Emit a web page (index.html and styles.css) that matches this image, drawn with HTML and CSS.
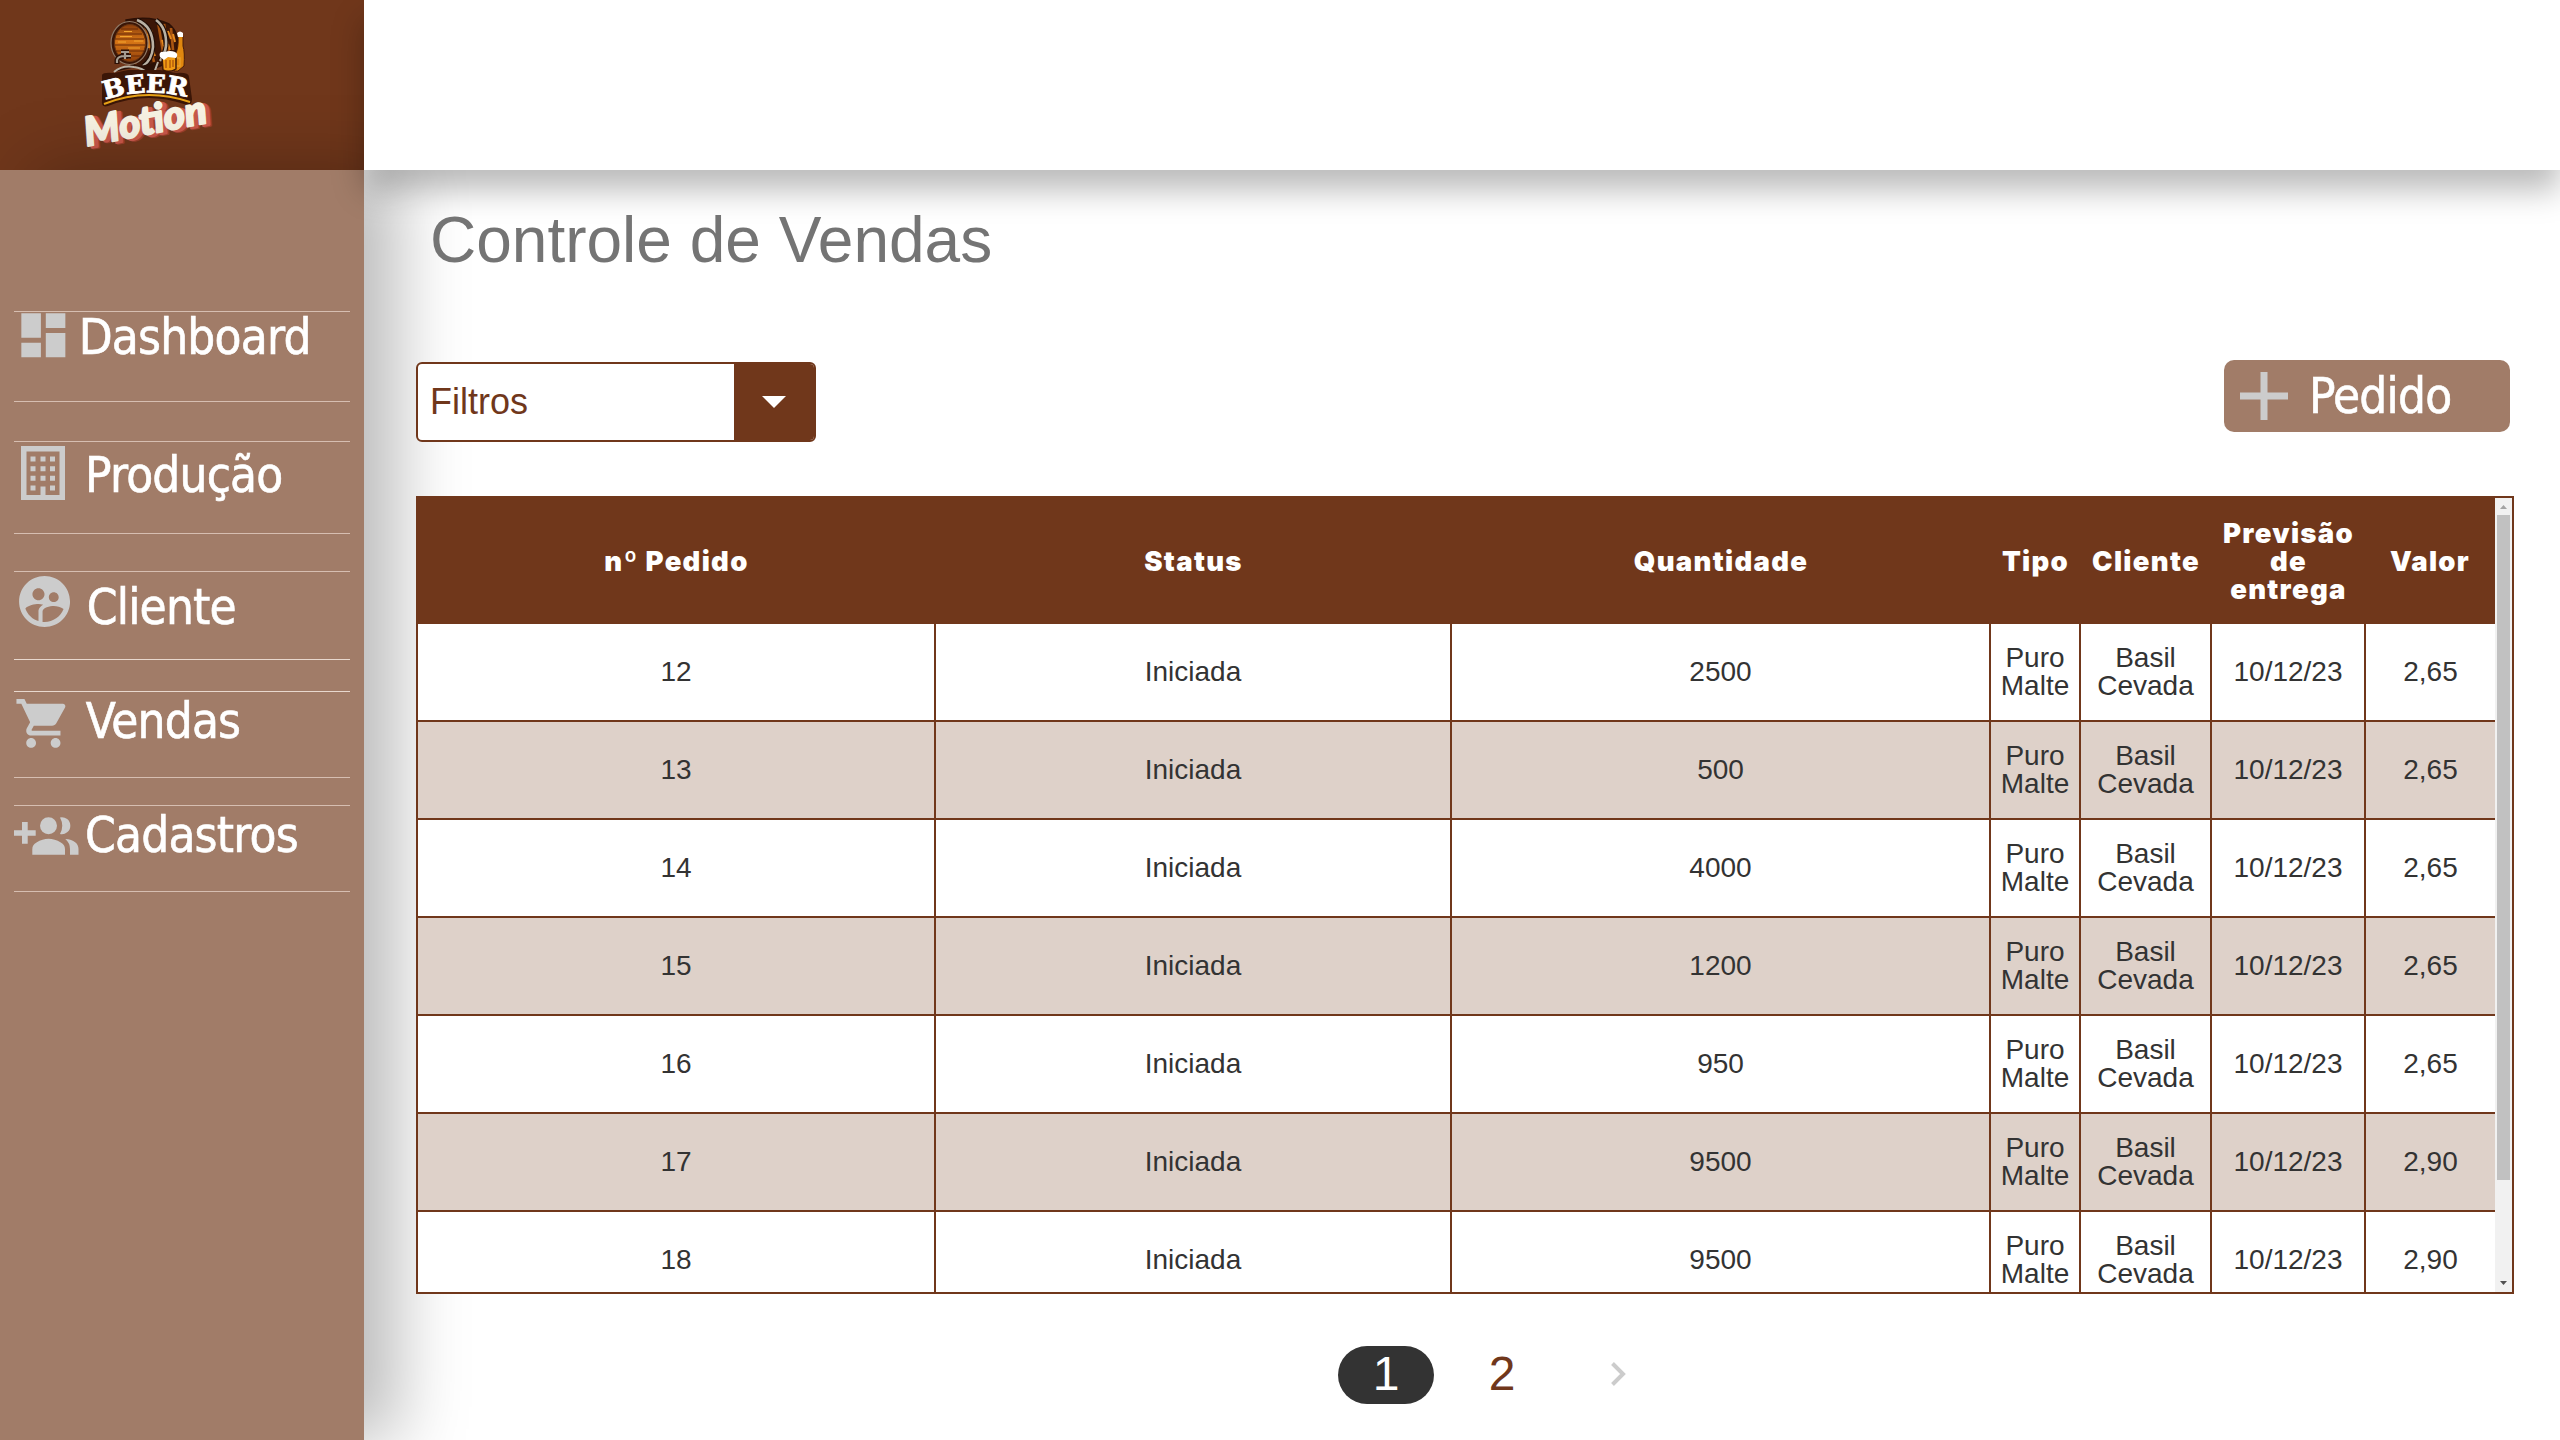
FILE: index.html
```html
<!DOCTYPE html>
<html lang="pt-BR">
<head>
<meta charset="utf-8">
<title>Beer Motion - Controle de Vendas</title>
<link rel="stylesheet" href="styles.css">
</head>
<body>
<div class="brand">
  <svg class="logo" viewBox="80 10 140 145" role="img" aria-label="Beer Motion">
    <defs>
      <linearGradient id="wood" x1="0" y1="0" x2="0" y2="1">
        <stop offset="0" stop-color="#8a3d0c"/><stop offset=".45" stop-color="#d97716"/><stop offset="1" stop-color="#8f3e0a"/>
      </linearGradient>
    </defs>
    <!-- barrel -->
    <path d="M126 20Q150 15 169 24Q180 33 177 49Q173 63 152 69L131 65Z" fill="#3b1607" stroke="#2b1006" stroke-width="1.5"/>
    <path d="M136 22Q141 42 135 64M158 22L164 58M164 24L169 54M171 28L173 50M144 22L154 62" stroke="#a95512" stroke-width="2.600" fill="none"/>
    <path d="M168 31l3 8M151 30l3 12M162 40l3 10M152 48l3 8M168 44l2 6M173 34l2 8M147 34l2 14" stroke="#e78a1f" stroke-width="2" fill="none"/>
    <ellipse cx="129.500" cy="43" rx="18.500" ry="21.500" fill="#3b1607" stroke="#8f7a68" stroke-width="1.200"/>
    <ellipse cx="130" cy="43" rx="15.500" ry="18.500" fill="url(#wood)" stroke="#6a3512" stroke-width="1"/>
    <path d="M117 34h25M115 39h29M115 45h30M116 51h28M119 56h22M121 29h17" stroke="#682b08" stroke-width="1" fill="none"/>
    <path d="M120 36.500h12M134 41h9M118 42h8M128 48h12M124 31.500h8" stroke="#f3a52f" stroke-width="1" fill="none"/>
    <path d="M137 20Q153 26 153 47Q152 60 143 66M156 20Q167 28 166 46Q165 54 160 61" stroke="#1f0d06" stroke-width="5" fill="none"/>
    <path d="M137 20Q153 26 153 47Q152 60 143 66M156 20Q167 28 166 46Q165 54 160 61" stroke="#b9b1a4" stroke-width="2.600" fill="none"/>
    <!-- tap and stand -->
    <path d="M117 64V60Q118 56 125 56H131M125 52V59M121 52H129" stroke="#2b1006" stroke-width="5" fill="none"/>
    <path d="M117 63V60Q118 56 125 56H131M125 52V59M121 52H129" stroke="#a59c90" stroke-width="2.200" fill="none"/>
    <path d="M114 72Q122 65 134 67Q142 68 148 73H154L158 62" stroke="#b9b1a4" stroke-width="2" fill="#2b1006"/>
    <!-- bottle and mug -->
    <path d="M178 36h5V46Q185 52 184 66L178 71H174L175 55Q179 48 178 36Z" fill="#e0870f" stroke="#4a1d08" stroke-width="1"/>
    <path d="M177 33q3-3 6 0v4h-5z" fill="#fff"/>
    <path d="M176 58h4v8h-4" stroke="#e9a02a" stroke-width="1.500" fill="none"/>
    <path d="M162 56H176V69Q169 73 163 70Z" fill="#f09a14" stroke="#3b1607" stroke-width="1.400"/>
    <path d="M166 60v8M170 60v8M173 60v7" stroke="#a64d0a" stroke-width="1.200"/>
    <path d="M160 57Q158 51 165 52Q170 50 175 52Q179 54 176 58L168 57L164 60Z" fill="#fff"/>
    <!-- name -->
    <path d="M102 75Q103 72 114 73L128 70H160L176 73Q189 72 189 77L192 99Q192 107 184 104Q146 91 108 106Q101 108 102 101Z" fill="#3b1607"/>
    <path d="M104 104Q146 87 190 102" stroke="#e7a217" stroke-width="2" fill="none"/>
    <path id="arc" d="M105 100Q146 86 190 98" fill="none"/>
    <text class="logo-beer"><textPath href="#arc" textLength="83" lengthAdjust="spacingAndGlyphs">BEER</textPath></text>
    <g transform="rotate(-11 88 147)">
      <text class="logo-motion logo-motion--deep" x="92" y="149" textLength="124" lengthAdjust="spacingAndGlyphs">Motion</text>
      <text class="logo-motion logo-motion--mid" x="90.500" y="148" textLength="124" lengthAdjust="spacingAndGlyphs">Motion</text>
      <text class="logo-motion" x="87" y="146" textLength="124" lengthAdjust="spacingAndGlyphs">Motion</text>
    </g>
  </svg>
</div>

<header class="topbar"></header>

<nav class="sidebar">
  <a class="nav-item nav-item--dashboard">
    <svg class="icon" viewBox="0 0 24 24"><path d="M3 13h8V3H3v10zm0 8h8v-6H3v6zm10 0h8V11h-8v10zm0-18v6h8V3h-8z"/></svg>
    <span class="nav-label">Dashboard</span>
  </a>
  <a class="nav-item nav-item--producao">
    <svg class="icon icon--building" viewBox="0 0 44 54"><path fill-rule="evenodd" d="M0 0H44V54H0ZM5.500 5.500V49H19.500V40.500H24.500V49H38.500V5.500Z"/><path d="M9.500 10.500h5v5h-5zm10 0h5v5h-5zm9.500 0h5v5h-5zm-19.500 9.700h5v5h-5zm10 0h5v5h-5zm9.500 0h5v5h-5zm-19.500 9.500h5v5h-5zm10 0h5v5h-5zm9.500 0h5v5h-5zm-19.500 9.800h5v5h-5zm19.500 0h5v5h-5z"/></svg>
    <span class="nav-label">Produção</span>
  </a>
  <a class="nav-item nav-item--cliente">
    <svg class="icon icon--client" viewBox="0 0 24 24"><path d="M11.990 2c-5.520 0-10 4.480-10 10s4.480 10 10 10 10-4.480 10-10-4.480-10-10-10zm3.610 6.340c1.070 0 1.930.86 1.930 1.930 0 1.070-.86 1.930-1.930 1.930-1.070 0-1.930-.86-1.930-1.930-.01-1.070.86-1.930 1.930-1.930zm-6-1.580c1.300 0 2.360 1.060 2.360 2.360 0 1.300-1.060 2.360-2.360 2.360s-2.360-1.060-2.360-2.360c0-1.310 1.050-2.360 2.360-2.360zm0 9.130v3.750c-2.400-.75-4.300-2.600-5.140-4.960 1.050-1.120 3.670-1.690 5.140-1.690.53 0 1.200.08 1.900.22-1.640.87-1.900 2.020-1.900 2.680zM11.990 20c-.27 0-.53-.01-.79-.04v-4.070c0-1.420 2.940-2.130 4.400-2.130 1.070 0 2.920.39 3.840 1.150-1.170 2.970-4.060 5.090-7.450 5.090z"/></svg>
    <span class="nav-label">Cliente</span>
  </a>
  <a class="nav-item nav-item--vendas">
    <svg class="icon" viewBox="0 0 24 24"><path d="M7 18c-1.100 0-1.990.9-1.990 2S5.900 22 7 22s2-.9 2-2-.9-2-2-2zM1 2v2h2l3.600 7.590-1.350 2.450c-.16.28-.25.61-.25.96 0 1.100.9 2 2 2h12v-2H7.420c-.14 0-.25-.11-.25-.25l.03-.12.9-1.630h7.450c.75 0 1.410-.41 1.750-1.030l3.580-6.490c.08-.14.12-.31.12-.48 0-.55-.45-1-1-1H5.210l-.94-2H1zm16 16c-1.100 0-1.990.9-1.990 2s.89 2 1.990 2 2-.9 2-2-.9-2-2-2z"/></svg>
    <span class="nav-label">Vendas</span>
  </a>
  <a class="nav-item nav-item--cadastros">
    <svg class="icon icon--group" viewBox="0 0 65 38"><path d="M8 5h5.700v8.300h8v5.400h-8v8H8v-8H0v-5.400h8z"/><circle cx="34.500" cy="8.700" r="8.500"/><path d="M46 .4A8.500 8.500 0 1 1 46 17Q50.500 8.700 46 .4ZM18.300 37.800V32.200C18.300 29 19.800 27 22.500 25.500Q34.500 18 46.800 25.500C49.500 27 51 29 51 32.200V37.800ZM51.300 22C60 22.500 64.500 26.500 64.500 32V37.800H56V32Q56 26 51.300 22Z"/></svg>
    <span class="nav-label">Cadastros</span>
  </a>
</nav>

<main class="content">
  <h1 class="title">Controle de Vendas</h1>

  <div class="toolbar">
    <div class="select">
      <span class="select-value">Filtros</span>
      <span class="select-toggle"><svg class="caret" viewBox="0 0 24 12"><path d="M0 0H24L12 12Z"/></svg></span>
    </div>
    <button class="add-button" type="button">
      <svg class="plus" viewBox="0 0 48 48"><path d="M20.500 0h7v20.500H48v7H27.500V48h-7V27.500H0v-7h20.500z"/></svg>
      <span class="nav-label">Pedido</span>
    </button>
  </div>

  <div class="table-box">
    <table class="orders">
      <colgroup><col class="c-num"><col class="c-status"><col class="c-qty"><col class="c-type"><col class="c-client"><col class="c-date"><col class="c-value"></colgroup>
      <thead>
        <tr><th>nº Pedido</th><th>Status</th><th>Quantidade</th><th>Tipo</th><th>Cliente</th><th>Previsão<br>de<br>entrega</th><th>Valor</th></tr>
      </thead>
      <tbody>
        <tr><td>12</td><td>Iniciada</td><td>2500</td><td>Puro<br>Malte</td><td>Basil<br>Cevada</td><td>10/12/23</td><td>2,65</td></tr>
        <tr><td>13</td><td>Iniciada</td><td>500</td><td>Puro<br>Malte</td><td>Basil<br>Cevada</td><td>10/12/23</td><td>2,65</td></tr>
        <tr><td>14</td><td>Iniciada</td><td>4000</td><td>Puro<br>Malte</td><td>Basil<br>Cevada</td><td>10/12/23</td><td>2,65</td></tr>
        <tr><td>15</td><td>Iniciada</td><td>1200</td><td>Puro<br>Malte</td><td>Basil<br>Cevada</td><td>10/12/23</td><td>2,65</td></tr>
        <tr><td>16</td><td>Iniciada</td><td>950</td><td>Puro<br>Malte</td><td>Basil<br>Cevada</td><td>10/12/23</td><td>2,65</td></tr>
        <tr><td>17</td><td>Iniciada</td><td>9500</td><td>Puro<br>Malte</td><td>Basil<br>Cevada</td><td>10/12/23</td><td>2,90</td></tr>
        <tr><td>18</td><td>Iniciada</td><td>9500</td><td>Puro<br>Malte</td><td>Basil<br>Cevada</td><td>10/12/23</td><td>2,90</td></tr>
      </tbody>
    </table>
    <div class="scrollbar">
      <svg class="scroll-arrow" viewBox="0 0 17 17"><path d="M5 11H12L8.500 7Z" fill="#a3a3a3"/></svg>
      <div class="scroll-thumb"></div>
      <svg class="scroll-arrow" viewBox="0 0 17 17"><path d="M5 6H12L8.500 10Z" fill="#505050"/></svg>
    </div>
  </div>

  <div class="pager">
    <span class="page page--current">1</span>
    <span class="page">2</span>
    <svg class="chevron" viewBox="0 0 15 24"><path d="M1.500 1.500L12 12L1.500 22.500"/></svg>
  </div>
</main>
</body>
</html>
```
FILE: styles.css
```css
* { box-sizing: border-box; }

body {
  margin: 0;
  width: 2560px;
  height: 1440px;
  overflow: hidden;
  display: grid;
  grid-template: 170px 1fr / 364px 1fr;
  background: #fff;
  font-family: "Liberation Sans", Arial, sans-serif;
}

.brand {
  background: #70371b;
  padding: 10px 0 0 80px;
}
.logo { display: block; width: 140px; height: 145px; overflow: visible; }
.logo-beer {
  font: bold 25px "DejaVu Serif", serif;
  fill: #fff;
  stroke: #fff;
  stroke-width: .8;
}
.logo-motion {
  font: italic 900 40px Lato, sans-serif;
  fill: #f8f3e4;
  stroke: #f8f3e4;
  stroke-width: 2;
  stroke-linejoin: round;
}
.logo-motion--mid { fill: #c9584b; stroke: #c9584b; stroke-width: 3; }
.logo-motion--deep { fill: #98402f; stroke: #98402f; stroke-width: 3; }

.topbar {
  position: relative;
  z-index: 2;
  background: #fff;
  box-shadow: 0 20px 30px rgba(0, 0, 0, .27);
}

.sidebar {
  position: relative;
  z-index: 1;
  display: flex;
  flex-direction: column;
  padding: 141px 14px 0;
  background: #a17c68;
  box-shadow: 33px 0 66px rgba(0, 0, 0, .27);
}

.nav-item {
  display: flex;
  align-items: flex-start;
  border-top: 1px solid #d6beb1;
  border-bottom: 1px solid #d6beb1;
}
.icon { flex: none; width: 58.700px; height: 58.700px; fill: #ccc; }
.icon--building { width: 44px; height: 54px; margin: 4px 0 0 7px; }
.icon--client { width: 61.200px; height: 61.200px; margin-left: -.5px; }
.icon--group { width: 65px; height: 38px; margin-top: 11px; }
.nav-label {
  font: 49px/58px "DejaVu Sans Condensed", "DejaVu Sans", sans-serif;
  font-stretch: condensed;
  letter-spacing: -.8px;
  white-space: nowrap;
  color: #fff;
  -webkit-text-stroke: .6px #fff;
}
.nav-item--dashboard { height: 91px; }
.nav-item--dashboard .icon { margin-top: -6px; }
.nav-item--dashboard .nav-label { margin: -3px 0 0 6px; }
.nav-item--producao { height: 93px; margin-top: 39px; }
.nav-item--producao .nav-label { margin: 5px 0 0 20px; }
.nav-item--cliente { height: 89px; margin-top: 37px; }
.nav-item--cliente .icon { margin-top: -1px; }
.nav-item--cliente .nav-label { margin: 7px 0 0 12px; }
.nav-item--vendas { height: 87px; margin-top: 31px; }
.nav-item--vendas .icon { margin-top: 2px; }
.nav-item--vendas .nav-label { margin: 1px 0 0 13px; }
.nav-item--cliente { border-bottom-color: #e8d8ce; }
.nav-item--vendas { border-top-color: #e8d8ce; }
.nav-item--cadastros { height: 87px; margin-top: 27px; }
.nav-item--cadastros .nav-label { margin: 1px 0 0 6px; }

.content {
  position: relative;
  z-index: 3;
  padding: 33px 46px 0 52px;
}

.title {
  margin: 0 0 0 14px;
  height: 74px;
  font-size: 64px;
  line-height: 74px;
  font-weight: 400;
  color: #747474;
}

.toolbar {
  display: flex;
  justify-content: space-between;
  align-items: flex-start;
  margin-top: 83px;
  padding-right: 4px;
}

.select {
  display: flex;
  width: 400px;
  height: 80px;
  margin-top: 2px;
  border: 2px solid #70371b;
  border-radius: 6px;
  background: #fff;
  overflow: hidden;
}
.select-value {
  flex: 1;
  padding-left: 12px;
  font-size: 36px;
  line-height: 76px;
  color: #70371b;
}
.select-toggle {
  display: flex;
  align-items: center;
  justify-content: center;
  width: 80px;
  background: #70371b;
}
.caret { width: 24px; height: 12px; fill: #fff; }

.add-button {
  display: flex;
  align-items: flex-start;
  width: 286px;
  height: 72px;
  padding: 0 0 0 16px;
  border: 0;
  border-radius: 10px;
  background: #a17c68;
}
.plus { width: 48px; height: 48px; margin-top: 12px; fill: #ccc; }
.add-button .nav-label { margin: 8px 0 0 21px; }

.table-box {
  display: flex;
  width: 2098px;
  height: 798px;
  margin-top: 54px;
  border: 2px solid #70371b;
  background: #fff;
  overflow: hidden;
}
.orders {
  flex: none;
  align-self: flex-start;
  width: 2077px;
  table-layout: fixed;
  border-collapse: separate;
  border-spacing: 0;
}
.c-num { width: 518px; }
.c-status { width: 516px; }
.c-qty { width: 539px; }
.c-type { width: 90px; }
.c-client { width: 131px; }
.c-date { width: 154px; }
.c-value { width: 129px; }
.orders th, .orders td {
  padding: 0;
  text-align: center;
  vertical-align: middle;
  font-size: 28px;
  line-height: 28px;
  white-space: nowrap;
}
.orders th {
  height: 126px;
  padding-right: 1px;
  background: #70371b;
  color: #fff;
  font-family: Inter, sans-serif;
  font-weight: 900;
  font-size: 27.500px;
  letter-spacing: 1.300px;
}
.orders td {
  height: 98px;
  border-right: 2px solid #70371b;
  border-bottom: 2px solid #70371b;
  color: #333;
}
.orders td:last-child { border-right: 0; }
.orders tbody tr:nth-child(even) td { background: #ded1c9; }

.scrollbar {
  display: flex;
  flex-direction: column;
  align-items: center;
  width: 17px;
  background: #f1f1f1;
}
.scroll-arrow { flex: none; width: 17px; height: 17px; }
.scroll-thumb {
  width: 13px;
  height: 665px;
  margin-bottom: auto;
  background: #c1c1c1;
}

.pager {
  display: flex;
  align-items: center;
  height: 58px;
  margin: 52px 0 0 922px;
}
.page {
  width: 96px;
  height: 58px;
  text-align: center;
  font-size: 48px;
  line-height: 56px;
  color: #70371b;
}
.page--current {
  margin-right: 20px;
  border-radius: 29px;
  background: #333;
  color: #fff;
}
.chevron {
  width: 15px;
  height: 24px;
  margin: 0 0 2px 61px;
  fill: none;
  stroke: #ccc;
  stroke-width: 4;
}
```
